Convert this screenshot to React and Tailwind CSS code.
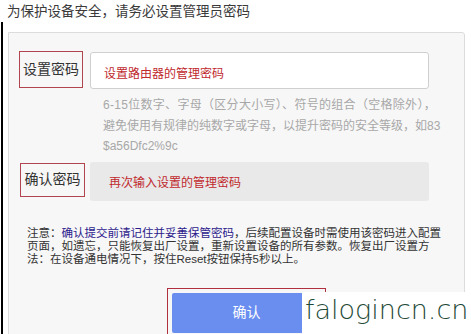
import React from 'react';

const cjk = { fontFamily: '"Liberation Sans", "Noto Sans CJK SC", sans-serif' };

export default function App() {
  return (
    <div className="relative w-[471px] h-[334px] overflow-hidden bg-white text-[#333]" style={cjk}>
      {/* Title */}
      <div className="h-[22px] pl-[7px] pt-[3px] text-[13.5px] leading-[17px] text-[#3a3a3a] whitespace-nowrap">
        为保护设备安全，请务必设置管理员密码
      </div>

      <div className="ml-[1px] h-[312px] border-l-2 border-black pl-[5px] pr-[6px] pt-[10px]">
        <div className="h-[320px] rounded-tr-[3px] border border-[#dcdcdc] bg-[#f7f7f7] pl-[10px] pt-[18px]">
          {/* Password row */}
          <div className="flex items-start gap-[7px]">
            <div className="flex h-[37px] w-[64px] items-center justify-center border border-[#b0454f] text-[14px] text-[#333]">
              设置密码
            </div>
            <div className="mt-[1px] flex h-[37px] w-[339px] items-center rounded-[3px] border border-[#cfcfcf] bg-white pl-[13px] pt-[6px] text-[12px] text-[#c0282d]">
              设置路由器的管理密码
            </div>
          </div>

          {/* Hint */}
          <div className="ml-[84px] mt-[6px] text-[12px] leading-[20.5px] text-[#a8a8a8] whitespace-nowrap">
            <div className="tracking-[0.3px]">6-15位数字、字母（区分大小写）、符号的组合（空格除外），</div>
            <div>避免使用有规律的纯数字或字母，以提升密码的安全等级，如83</div>
            <div>$a56Dfc2%9c</div>
          </div>

          {/* Confirm row */}
          <div className="mt-[5px] flex items-start gap-[5px] pl-[1px]">
            <div className="mt-[1px] flex h-[34px] w-[65px] items-center justify-center border border-[#b0454f] text-[14px] text-[#333]">
              确认密码
            </div>
            <div className="flex h-[39px] w-[339px] items-center rounded-[3px] bg-[#e9e9e9] pl-[19px] pt-[3px] text-[12px] text-[#c0282d]">
              再次输入设置的管理密码
            </div>
          </div>

          {/* Notice */}
          <div className="ml-[8px] mt-[26px] text-[11.5px] leading-[13px] text-[#333] whitespace-nowrap">
            <div>
              注意：<span className="text-[#2c1a8c]">确认提交前请记住并妥善保管密码</span>，后续配置设备时需使用该密码进入配置
            </div>
            <div>页面，如遗忘，只能恢复出厂设置，重新设置设备的所有参数。恢复出厂设置方</div>
            <div>法：在设备通电情况下，按住Reset按钮保持5秒以上。</div>
          </div>

          {/* Submit */}
          <div className="ml-[148px] mt-[22px] w-[159px] border border-[#b03040] p-[4px]">
            <button className="flex h-[40px] w-full items-center justify-center rounded-[2px] bg-[#6a8ef0] text-[14px] text-white">
              确认
            </button>
          </div>
        </div>
      </div>

      {/* Watermark */}
      <div
        className="absolute left-[302px] top-[292px] h-[42px] w-[169px] bg-white pl-[3px] text-[27px] leading-[36px] text-[#1f4a38] font-light whitespace-nowrap"
        style={{ fontFamily: '"DejaVu Sans", sans-serif' }}
      >
        falogincn.cn
      </div>
    </div>
  );
}
